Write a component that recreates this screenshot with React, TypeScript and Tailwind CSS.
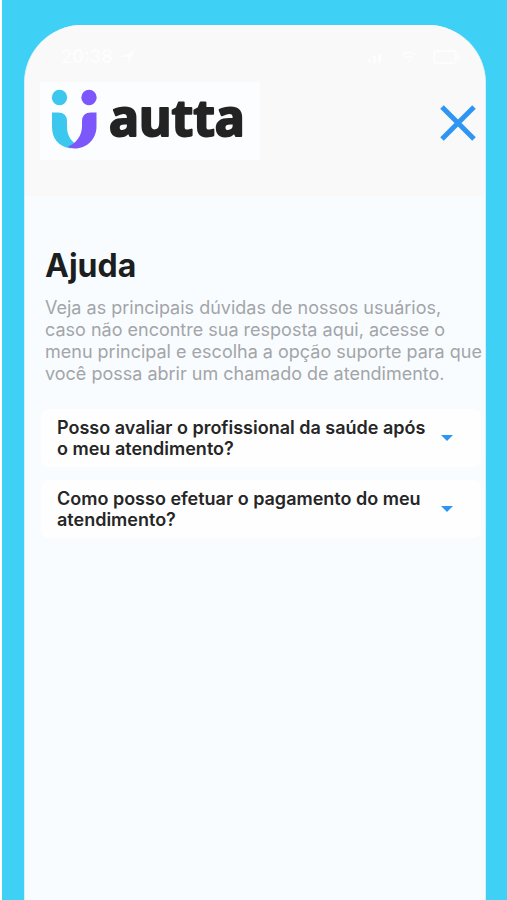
import React, { useState } from "react";

const questions = [
  {
    title: "Posso avaliar o profissional da saúde após o meu atendimento?",
    answer: "Sim, a avaliação fica disponível ao final do atendimento.",
  },
  {
    title: "Como posso efetuar o pagamento do meu atendimento?",
    answer: "O pagamento é feito pelo próprio aplicativo.",
  },
];

function StatusBar() {
  return (
    <div className="flex h-14 items-center justify-between pt-2 pr-6 pl-9 text-[#fdfdfd]">
      <div className="flex items-center gap-2">
        <span className="text-lg leading-6 font-semibold">20:38</span>
        <svg width="14" height="14" viewBox="0 0 14 14" fill="currentColor" aria-hidden="true">
          <path d="M0 6.5 14 0 8 14 7 7Z" />
        </svg>
      </div>
      <div className="flex h-6 items-center gap-4">
        <svg width="18" height="12" viewBox="0 0 18 12" fill="currentColor" aria-hidden="true">
          <path d="M1 8h3v4H1zM6 5h3v7H6zM11 3h3v9h-3z" />
        </svg>
        <svg width="16" height="12" viewBox="0 0 16 12" fill="none" stroke="currentColor" strokeWidth="2" aria-hidden="true">
          <path d="M1 4q7-5 14 0M4 7q4-3 8 0M7 10h2" />
        </svg>
        <svg width="28" height="14" viewBox="0 0 28 14" fill="none" stroke="currentColor" strokeWidth="2" aria-hidden="true">
          <rect x="1" y="1" width="22" height="12" rx="3" />
          <path d="M26 5v4" />
        </svg>
      </div>
    </div>
  );
}

function Logo() {
  return (
    <svg width="220" height="78" viewBox="0 0 220 78" role="img" aria-label="autta" className="bg-[#fbfdff]">
      <circle cx="19.5" cy="15.5" r="7.7" fill="#3cc8ee" />
      <circle cx="49" cy="15.5" r="7.7" fill="#7b57fc" />
      <path d="M12 30.500h6q9 0 9 9v5c0 8 3 13 8 17l-5 5q-18-4-18-22Z" fill="#3cc8ee" />
      <path d="M56.500 30.500H51q-9 0-9 9v5c0 9-6 17-14 20q2 2 6.500 2c13 0 22-10 22-22Z" fill="#7b57fc" />
      <text
        x="69"
        y="54"
        fill="#232323"
        stroke="#232323"
        strokeWidth="2"
        strokeLinejoin="round"
        className="font-['Noto_Sans',sans-serif] text-[50px] font-bold"
      >
        autta
      </text>
    </svg>
  );
}

function Question({ title, answer }: { title: string; answer: string }) {
  const [open, setOpen] = useState(false);
  return (
    <li className="rounded-lg bg-[#fefeff]">
      <button
        type="button"
        aria-expanded={open}
        onClick={() => setOpen(!open)}
        className="flex w-full items-center justify-between py-2 pr-7 pl-4 text-left"
      >
        <span className="max-w-[372px] text-lg leading-[21px] font-semibold text-[#262626]">{title}</span>
        <svg width="12" height="6" viewBox="0 0 12 6" fill="#2e95f3" aria-hidden="true" className="shrink-0">
          <path d="M0 0h12L6 6Z" />
        </svg>
      </button>
      {open && <p className="px-4 pb-3 text-base text-[#a3a5a8]">{answer}</p>}
    </li>
  );
}

export default function App() {
  return (
    <div className="min-h-screen border-l-2 border-white bg-[#3fd0f6] pt-[25px] pr-[21px] pl-[22px] font-['Inter',sans-serif]">
      <div className="flex min-h-[calc(100vh-25px)] flex-col overflow-hidden rounded-t-[58px] border-x border-[#d5eff9] bg-[#f8fcff]">
        <header className="bg-[#f9f9f9] pb-9">
          <StatusBar />
          <div className="flex items-center justify-between pt-px pr-2 pl-[15px]">
            <Logo />
            <button type="button" aria-label="Fechar" className="pt-1">
              <svg width="38" height="38" viewBox="0 0 38 38" fill="none" stroke="#2e95f3" strokeWidth="5" aria-hidden="true">
                <path d="M3 3 35 35M35 3 3 35" />
              </svg>
            </button>
          </div>
        </header>
        <main className="pt-[50px] pl-5">
          <h1 className="text-[32px] leading-10 font-bold text-[#1c1e20]">Ajuda</h1>
          <p className="mt-[11px] text-lg leading-[22px] text-[#a3a5a8]">
            Veja as principais dúvidas de nossos usuários,
            <br />
            caso não encontre sua resposta aqui, acesse o
            <br />
            menu principal e escolha a opção suporte para que
            <br />
            você possa abrir um chamado de atendimento.
          </p>
          <ul className="mt-6 mr-1 -ml-1 flex flex-col gap-[13px]">
            {questions.map((q) => (
              <Question key={q.title} {...q} />
            ))}
          </ul>
        </main>
      </div>
    </div>
  );
}
